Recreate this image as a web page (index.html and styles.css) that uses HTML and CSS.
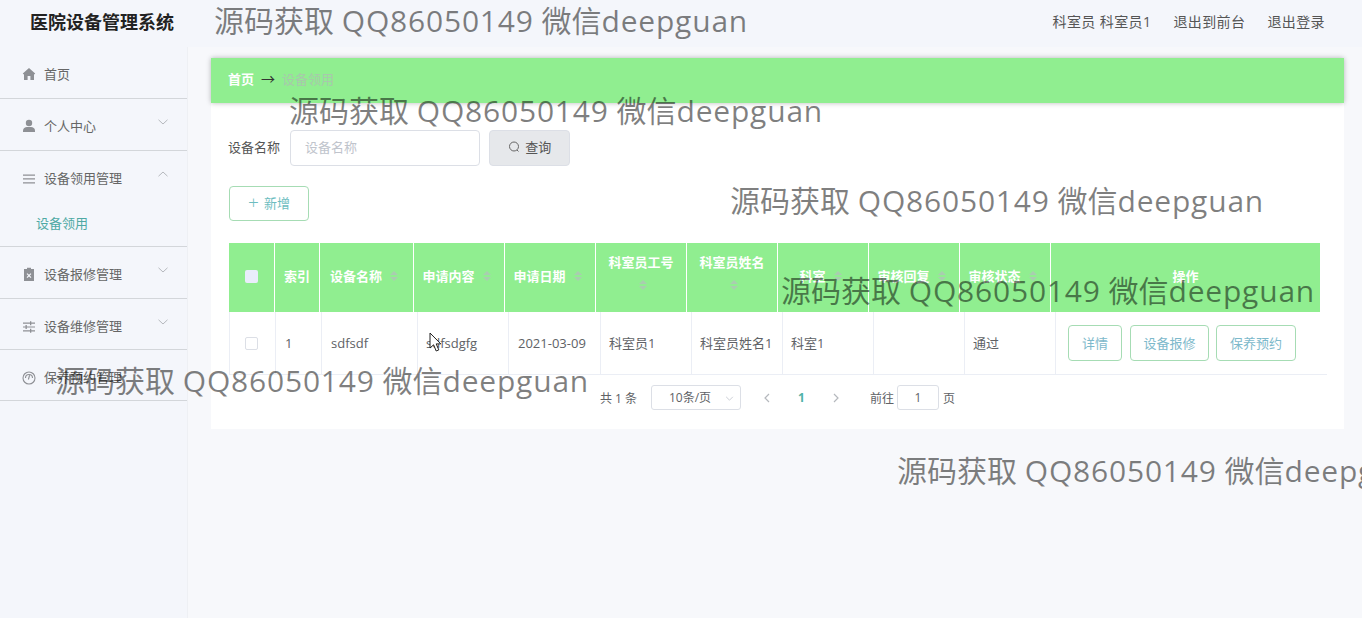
FILE: index.html
```html
<!DOCTYPE html>
<html lang="zh-CN">
<head>
    <meta charset="UTF-8">
    <title>医院设备管理系统</title>
    <link rel="stylesheet" href="styles.css">
</head>
<body>

<header class="topbar">
    <h1 class="brand">医院设备管理系统</h1>
    <nav class="topnav">
        <span>科室员 科室员1</span>
        <a>退出到前台</a>
        <a>退出登录</a>
    </nav>
</header>

<div class="layout">
    <aside class="sidebar">
        <div class="menu-item">
            <svg class="menu-icon" viewBox="0 0 14 14"><path d="M7 1 .8 6.600 1.500 7.500 2 7.100V13h3.600V9h2.800v4H12V7.100l.5.4.7-.9z"/></svg>
            <span>首页</span>
        </div>
        <div class="menu-item">
            <svg class="menu-icon" viewBox="0 0 14 14"><circle cx="7" cy="4" r="3.200"/><path d="M1 13v-1.600C1 9.300 3 8 5 8h4c2 0 4 1.300 4 3.400V13z"/></svg>
            <span>个人中心</span>
            <svg class="chevron" viewBox="0 0 10 6"><path d="M.5.8 5 5 9.500.8"/></svg>
        </div>
        <div class="menu-group">
            <div class="menu-item menu-open">
                <svg class="menu-icon" viewBox="0 0 14 14"><path d="M1 2.500h12v1.300H1zM1 6.300h12v1.300H1zM1 10.200h12v1.300H1z"/></svg>
                <span>设备领用管理</span>
                <svg class="chevron" viewBox="0 0 10 6"><path d="M.5 5.200 5 1l4.500 4.200"/></svg>
            </div>
            <div class="menu-sub">设备领用</div>
        </div>
        <div class="menu-item">
            <svg class="menu-icon" viewBox="0 0 14 14"><path d="M2 2h3V.8h4V2h3v12H2zM5.400 6.200l-.8.8L6.200 8.600 4.600 10.200l.8.8L7 9.400l1.600 1.600.8-.8-1.600-1.600L9.400 7l-.8-.8L7 7.800z" fill-rule="evenodd"/></svg>
            <span>设备报修管理</span>
            <svg class="chevron" viewBox="0 0 10 6"><path d="M.5.8 5 5 9.500.8"/></svg>
        </div>
        <div class="menu-item menu-short">
            <svg class="menu-icon" viewBox="0 0 14 14"><path d="M1 2.600h7V1.200h1.300v1.400H13v1.200H9.300v1.400H8V3.800H1zM1 6.400h2.500V5h1.300v1.400H13v1.200H4.800V9H3.500V7.600H1zM1 10.200h7V8.800h1.300v1.400H13v1.200H9.300v1.400H8v-1.400H1z"/></svg>
            <span>设备维修管理</span>
            <svg class="chevron" viewBox="0 0 10 6"><path d="M.5.8 5 5 9.500.8"/></svg>
        </div>
        <div class="menu-item menu-short">
            <svg class="menu-icon gauge" viewBox="0 0 14 14"><circle cx="7" cy="7" r="6"/><path d="M7.800 3.500 6.400 8.500M3.500 7a3.500 3.500 0 0 1 7 0"/></svg>
            <span>保养预约管理</span>
        </div>
    </aside>

    <main class="content">
        <div class="breadcrumb">
            <b>首页</b>
            <span class="crumb-sep">→</span>
            <span class="crumb-current">设备领用</span>
        </div>

        <section class="panel">
            <div class="search-row">
                <label class="search-label">设备名称</label>
                <input class="search-input" placeholder="设备名称">
                <button class="btn-search">
                    <svg class="search-icon" viewBox="0 0 12 12"><circle cx="6" cy="5.500" r="4.500"/><path d="m9 9 1.500 1.500"/></svg>
                    查询
                </button>
            </div>

            <button class="btn-add"><span class="plus">+</span>新增</button>

            <div class="table">
                <div class="thead">
                    <div class="th"><i class="head-check"></i></div>
                    <div class="th">索引</div>
                    <div class="th"><span>设备名称</span><i class="sort"></i></div>
                    <div class="th"><span>申请内容</span><i class="sort"></i></div>
                    <div class="th"><span>申请日期</span><i class="sort"></i></div>
                    <div class="th th-wrap"><span>科室员工号</span><i class="sort"></i></div>
                    <div class="th th-wrap"><span>科室员姓名</span><i class="sort"></i></div>
                    <div class="th"><span>科室</span><i class="sort"></i></div>
                    <div class="th"><span>审核回复</span><i class="sort"></i></div>
                    <div class="th"><span>审核状态</span><i class="sort"></i></div>
                    <div class="th">操作</div>
                </div>
                <div class="tbody">
                    <div class="td td-check"><i class="row-check"></i></div>
                    <div class="td">1</div>
                    <div class="td">sdfsdf</div>
                    <div class="td">sdfsdgfg</div>
                    <div class="td">2021-03-09</div>
                    <div class="td">科室员1</div>
                    <div class="td">科室员姓名1</div>
                    <div class="td">科室1</div>
                    <div class="td"></div>
                    <div class="td">通过</div>
                    <div class="td td-actions">
                        <button class="btn-row btn-detail">详情</button>
                        <button class="btn-row btn-repair">设备报修</button>
                        <button class="btn-row btn-book">保养预约</button>
                    </div>
                </div>
            </div>

            <div class="pager">
                <span class="pager-total">共 1 条</span>
                <div class="pager-size">10条/页
                    <svg class="pager-caret" viewBox="0 0 10 6"><path d="M1 1 5 5 9 1"/></svg>
                </div>
                <svg class="pager-arrow" viewBox="0 0 6 10"><path d="M5 1 1 5l4 4"/></svg>
                <b class="pager-num">1</b>
                <svg class="pager-arrow" viewBox="0 0 6 10"><path d="m1 1 4 4-4 4"/></svg>
                <span class="pager-goto">前往</span>
                <div class="pager-input">1</div>
                <span>页</span>
            </div>
        </section>
    </main>
</div>

<svg class="cursor" viewBox="0 0 13 20"><path d="M1 1v15l3.600-3.200L7.200 19l2.600-1.100-2.600-6h4.600z"/></svg>

<div class="wm wm-1">源码获取 <span>QQ86050149</span> 微信<span>deepguan</span></div>
<div class="wm wm-2">源码获取 <span>QQ86050149</span> 微信<span>deepguan</span></div>
<div class="wm wm-3">源码获取 <span>QQ86050149</span> 微信<span>deepguan</span></div>
<div class="wm wm-4">源码获取 <span>QQ86050149</span> 微信<span>deepguan</span></div>
<div class="wm wm-5">源码获取 <span>QQ86050149</span> 微信<span>deepguan</span></div>
<div class="wm wm-6">源码获取 <span>QQ86050149</span> 微信<span>deepguan</span></div>

</body>
</html>
```

FILE: styles.css
```css
* {
    box-sizing: border-box;
}

html, body {
    height: 100%;
}

body {
    margin: 0;
    position: relative;
    overflow: hidden;
    background-color: #f4f6fb;
    color: #606266;
    font-family: "Open Sans", "Noto Sans CJK SC", sans-serif;
    font-size: 13px;
}

.topbar {
    height: 47px;
    display: flex;
    align-items: center;
    justify-content: space-between;
    padding: 0 37px 6px 30px;
}

.brand {
    margin: 0;
    font-size: 18px;
    font-weight: 700;
    color: #222;
}

.topnav {
    display: flex;
    gap: 22px;
    font-size: 14px;
    letter-spacing: .4px;
    color: #555;
}

.layout {
    display: flex;
    height: 571px;
}

.sidebar {
    width: 188px;
    flex-shrink: 0;
    border-right: 1px solid #eef0f4;
}

.menu-item {
    height: 52px;
    display: flex;
    align-items: center;
    padding: 1px 16px 0 22px;
    color: #666;
    position: relative;
    border-bottom: 1px solid #d3d6da;
}

.menu-short {
    height: 51px;
    padding-top: 3px;
}

.menu-group .menu-item {
    border-bottom: 0;
}

.menu-group {
    height: 96px;
    border-bottom: 1px solid #d3d6da;
}

.menu-icon {
    width: 14px;
    height: 14px;
    margin: 2px 8px 0 0;
    fill: #8e9095;
}

.menu-icon.gauge {
    fill: none;
    stroke: #8e9095;
    stroke-width: 1.1;
}

.chevron {
    position: absolute;
    right: 19px;
    top: 20px;
    width: 10px;
    height: 6px;
    fill: none;
    stroke: #b5b8bd;
    stroke-width: 1;
}

.menu-sub {
    height: 43px;
    padding-left: 36px;
    line-height: 40px;
    color: #4fa9a4;
}

.content {
    flex: 1;
    padding: 11px 18px 0 23px;
    background-color: #f7f8fb;
}

.breadcrumb {
    height: 45px;
    display: flex;
    align-items: center;
    padding: 0 0 5px 17px;
    background-color: #90ee90;
    box-shadow: 0 0 5px rgba(0, 0, 0, .28);
    color: #fff;
    position: relative;
}

.crumb-sep {
    margin: 0 7px;
    color: #333;
    font-size: 14px;
}

.crumb-current {
    color: #a8c8ac;
}

.panel {
    height: 326px;
    background-color: #fff;
    padding: 27px 0 0 18px;
}

.search-row {
    display: flex;
    align-items: center;
    margin-left: -1px;
}

.search-label {
    width: 62px;
    padding-bottom: 3px;
    color: #555;
}

.search-input {
    width: 190px;
    height: 36px;
    border: 1px solid #dcdfe6;
    border-radius: 4px;
    padding: 0 14px 3px;
    font: inherit;
    outline: 0;
}

.search-input::placeholder {
    color: #c0c4cc;
}

.btn-search {
    width: 81px;
    height: 36px;
    margin-left: 9px;
    padding: 0 0 3px;
    border: 1px solid #dcdfe6;
    border-radius: 4px;
    background-color: #e6e8eb;
    color: #555;
    font: inherit;
}

.search-icon {
    width: 12px;
    height: 12px;
    margin-right: 2px;
    vertical-align: -1px;
    fill: none;
    stroke: #666;
    stroke-width: 1;
}

.btn-add {
    display: block;
    width: 80px;
    height: 35px;
    margin-top: 20px;
    padding: 0 0 2px;
    border: 1px solid #a6dcb4;
    border-radius: 4px;
    background-color: #fff;
    color: #6dbdc0;
    font: inherit;
}

.plus {
    margin-right: 5px;
    font-size: 19px;
    font-weight: 300;
    line-height: 1;
    vertical-align: -1px;
}

.table {
    margin-top: 22px;
}

.thead, .tbody {
    display: grid;
}

.thead {
    width: 1091px;
    height: 69px;
    grid-template-columns: 46px 45px 94px repeat(7, 91px) 269px;
    background-color: #90ee90;
}

.th {
    display: flex;
    flex-wrap: wrap;
    align-items: center;
    align-content: center;
    justify-content: center;
    padding: 0 8px 3px;
    border-right: 1px solid #fff;
    color: #fff;
    font-weight: 700;
    line-height: 23px;
}

.th-wrap {
    padding-bottom: 7px;
}

.th:last-child {
    border-right: 0;
}

.sort {
    width: 21px;
    height: 23px;
    position: relative;
}

.sort::before, .sort::after {
    content: "";
    position: absolute;
    left: 8px;
    border: 4px solid transparent;
}

.sort::before {
    top: 2px;
    border-bottom-color: #a9cdb0;
}

.sort::after {
    top: 12px;
    border-top-color: #a9cdb0;
}

.head-check {
    width: 13px;
    height: 13px;
    margin-top: 1px;
    border-radius: 2px;
    background-color: #e9edfb;
}

.tbody {
    width: 1098px;
    height: 63px;
    grid-template-columns: 46px 46px 96px 91px 92px 91px 91px 91px 91px 91px 272px;
    border-bottom: 1px solid #ebeef5;
    border-left: 1px solid #ebeef5;
}

.td {
    display: flex;
    align-items: center;
    padding: 0 0 1px 9px;
    border-right: 1px solid #ebeef5;
    white-space: nowrap;
}

.tbody .td:nth-child(4), .tbody .td:nth-child(n+6) {
    padding-left: 8px;
}

.tbody .td:last-child {
    border-right: 0;
    padding: 0 0 0 12px;
}

.td-check {
    justify-content: center;
    padding: 0 2px 0 0;
}

.row-check {
    width: 13px;
    height: 13px;
    border: 1px solid #dcdfe6;
    border-radius: 2px;
}

.btn-row {
    height: 36px;
    border: 1px solid #a6dcb4;
    border-radius: 4px;
    background-color: #fff;
    color: #7db9cb;
    font: inherit;
    padding: 0 0 2px;
}

.btn-detail {
    width: 54px;
}

.btn-repair {
    width: 79px;
    margin-left: 8px;
}

.btn-book {
    width: 80px;
    margin-left: 7px;
}

.pager {
    display: flex;
    align-items: center;
    height: 25px;
    margin-top: 10px;
    padding-left: 371px;
    font-size: 12px;
    color: #606266;
}

.pager-total {
    width: 51px;
}

.pager-size {
    width: 90px;
    height: 25px;
    position: relative;
    padding-left: 17px;
    line-height: 24px;
    border: 1px solid #dcdfe6;
    border-radius: 3px;
}

.pager-caret {
    position: absolute;
    right: 6px;
    top: 10px;
    width: 9px;
    height: 5px;
    fill: none;
    stroke: #c0c4cc;
}

.pager-arrow {
    width: 6px;
    height: 10px;
    margin-left: 23px;
    fill: none;
    stroke: #b5b8bd;
    stroke-width: 1.2;
}

.pager-num {
    margin-left: 28px;
    width: 6px;
    color: #4fb3a8;
}

.pager-num + .pager-arrow {
    margin-left: 29px;
}

.pager-goto {
    margin-left: 31px;
}

.pager-input {
    width: 42px;
    height: 25px;
    margin: 0 4px 0 3px;
    text-align: center;
    line-height: 23px;
    border: 1px solid #dcdfe6;
    border-radius: 3px;
}

.cursor {
    position: absolute;
    left: 429px;
    top: 332px;
    width: 13px;
    height: 20px;
    fill: #fff;
    stroke: #222;
    stroke-width: 1;
}

.wm {
    position: absolute;
    white-space: nowrap;
    font-size: 30px;
    line-height: 42px;
    color: rgba(0, 0, 0, .5);
    pointer-events: none;
}

.wm span {
    letter-spacing: .8px;
}

.wm-1 { left: 214px; top: 0; }
.wm-2 { left: 289px; top: 90px; }
.wm-3 { left: 730px; top: 180px; }
.wm-4 { left: 781px; top: 270px; }
.wm-5 { left: 55px; top: 360px; }
.wm-6 { left: 897px; top: 450px; }
```
